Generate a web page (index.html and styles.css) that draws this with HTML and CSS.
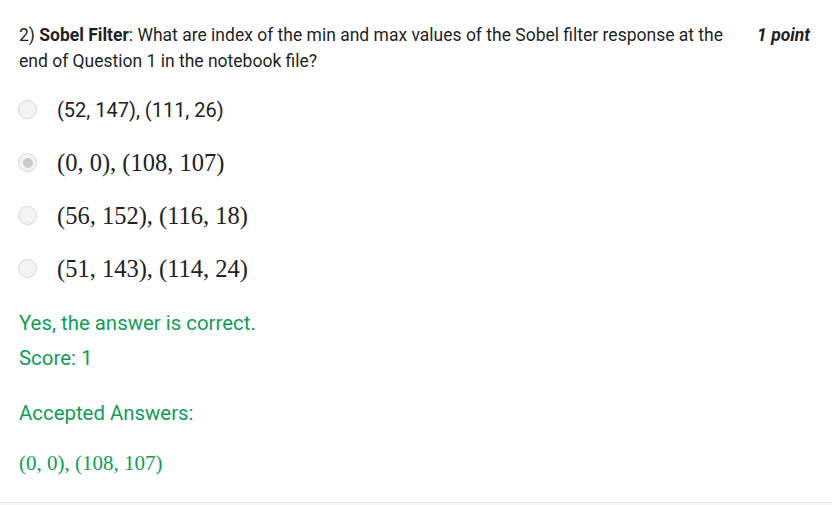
FILE: index.html
```html
<!DOCTYPE html>
<html>
<head>
<meta charset="utf-8">
<link rel="stylesheet" href="styles.css">
</head>
<body>
<div class="card">
  <div class="qhead">
    <div class="qtext">2) <b>Sobel Filter</b>: What are index of the min and max values of the Sobel filter response at the end of Question 1 in the notebook file?</div>
    <div class="points">1 point</div>
  </div>
  <div class="options">
    <div class="opt"><span class="radio"></span><span class="label sans">(52, 147), (111, 26)</span></div>
    <div class="opt"><span class="radio checked"></span><span class="label math">(0, 0), (108, 107)</span></div>
    <div class="opt"><span class="radio"></span><span class="label math">(56, 152), (116, 18)</span></div>
    <div class="opt"><span class="radio"></span><span class="label math">(51, 143), (114, 24)</span></div>
  </div>
  <div class="feedback">
    <div class="fb-line">Yes, the answer is correct.</div>
    <div class="fb-line">Score: 1</div>
    <div class="fb-line accepted">Accepted Answers:</div>
    <div class="answer math">(0, 0), (108, 107)</div>
  </div>
</div>
</body>
</html>
```

FILE: styles.css
```css
html, body {
  margin: 0;
  padding: 0;
  background: #f4f5f8;
}
body {
  font-family: Roboto, "Noto Sans", sans-serif;
  color: #1f1f1f;
}
.card {
  background: #fff;
  border-bottom: 1px solid #e4e6ec;
  padding: 22px 22px 24px 19px;
  height: 456px;
}
.qhead {
  display: flex;
  gap: 24px;
  align-items: flex-start;
}
.qtext {
  flex: 1;
  font-size: 17.5px;
  line-height: 26px;
}
.qtext b {
  font-weight: 700;
}
.points {
  font-size: 17.5px;
  line-height: 26px;
  font-weight: 700;
  font-style: italic;
  white-space: nowrap;
}
.options {
  margin-top: 9px;
  display: flex;
  flex-direction: column;
}
.opt {
  height: 53px;
  display: flex;
  align-items: center;
}
.radio {
  width: 19px;
  height: 19px;
  margin-left: -1px;
  border: 1px solid #d8d8d8;
  border-radius: 50%;
  background: #f4f4f4;
  box-sizing: border-box;
  display: flex;
  align-items: center;
  justify-content: center;
  margin-right: 20px;
  flex: none;
}
.radio.checked::after {
  content: "";
  width: 10px;
  height: 10px;
  border-radius: 50%;
  background: #cbcbcb;
}
.label {
  color: #222;
  white-space: nowrap;
}
.sans {
  font-family: Roboto, sans-serif;
  font-size: 20px;
}
.math {
  font-family: "Liberation Serif", "Times New Roman", serif;
  font-size: 24.5px;
}
.feedback {
  margin-top: 16px;
  color: #0f9d58;
}
.fb-line {
  font-size: 20.4px;
  line-height: 24px;
  margin-bottom: 11px;
}
.fb-line.accepted {
  margin-top: 31px;
  margin-bottom: 23px;
}
.answer {
  font-size: 21px;
  line-height: 30px;
  color: #0f9d58;
}
```
